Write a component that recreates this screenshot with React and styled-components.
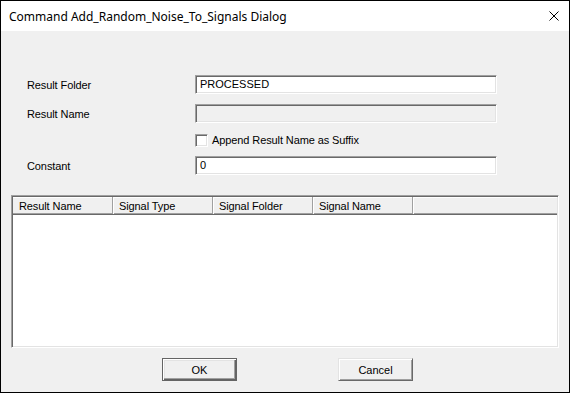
import React from "react";
import styled, { createGlobalStyle } from "styled-components";

const Global = createGlobalStyle`
  html, body { margin: 0; padding: 0; background: #f0f0f0; }
  * { box-sizing: border-box; }
`;

const Window = styled.div`
  width: 570px;
  height: 393px;
  border: 1px solid #000;
  display: flex;
  flex-direction: column;
  background: #f0f0f0;
  font-family: "Liberation Sans", Arial, sans-serif;
  font-size: 11px;
  color: #000;
`;

const TitleBar = styled.div`
  height: 30px;
  flex: none;
  background: #fff;
  display: flex;
  align-items: center;
  justify-content: space-between;
  padding: 0 10px 0 8px;
`;

const Title = styled.div`
  font-family: "Segoe UI", "Noto Sans", sans-serif;
  font-size: 12px;
  color: #000;
  padding-top: 1px;
`;

const CloseIcon = styled.svg`
  width: 10px;
  height: 10px;
`;

const Body = styled.div`
  flex: 1;
  display: flex;
  flex-direction: column;
  padding: 44px 10px 0 10px;
`;

const Form = styled.div`
  display: grid;
  grid-template-columns: 168px 302px;
  grid-template-rows: 19px 19px 13px 19px;
  row-gap: 10px;
  padding-left: 16px;
  align-items: center;
`;

const Label = styled.div`
  white-space: nowrap;
  letter-spacing: -0.1px;
`;

const Input = styled.div`
  height: 19px;
  width: 302px;
  background: ${(p) => (p.$disabled ? "#f0f0f0" : "#fff")};
  border-style: solid;
  border-width: 1px;
  border-color: #a0a0a0 #fff #fff #a0a0a0;
  box-shadow: inset 1px 1px 0 #696969, inset -1px -1px 0 #e3e3e3;
  padding: 2px 0 0 4px;
  line-height: 13px;
  white-space: nowrap;
`;

const CheckRow = styled.label`
  grid-column: 2;
  display: flex;
  align-items: center;
  gap: 4px;
  margin-top: 1px;
  letter-spacing: -0.1px;
`;

const CheckBox = styled.span`
  width: 13px;
  height: 13px;
  background: #fff;
  border-style: solid;
  border-width: 1px;
  border-color: #a0a0a0 #fff #fff #a0a0a0;
  box-shadow: inset 1px 1px 0 #696969, inset -1px -1px 0 #e3e3e3;
`;

const ListView = styled.div`
  margin-top: 20px;
  height: 153px;
  background: #fff;
  border-style: solid;
  border-width: 1px;
  border-color: #a0a0a0 #fff #fff #a0a0a0;
  box-shadow: inset 1px 1px 0 #696969, inset -1px -1px 0 #e3e3e3;
  padding: 1px;
  display: flex;
  flex-direction: column;
`;

const Header = styled.div`
  display: flex;
  height: 18px;
  background: #f0f0f0;
  border-bottom: 1px solid #696969;
  box-shadow: inset 0 -1px 0 #a0a0a0, inset 0 1px 0 #fff;
`;

const HeaderCell = styled.div`
  width: ${(p) => (p.$fill ? "auto" : "100px")};
  flex: ${(p) => (p.$fill ? "1" : "none")};
  padding: 3px 0 0 6px;
  border-right: ${(p) => (p.$fill ? "none" : "1px solid #a0a0a0")};
  box-shadow: ${(p) => (p.$first ? "none" : "inset 1px 0 0 #fff")};
  white-space: nowrap;
  line-height: 13px;
  letter-spacing: -0.1px;
`;

const Buttons = styled.div`
  display: flex;
  justify-content: center;
  gap: 101px;
  margin-top: 10px;
  padding-left: 5px;
`;

const Button = styled.button`
  width: 75px;
  height: 23px;
  font-family: "Liberation Sans", Arial, sans-serif;
  font-size: 11px;
  color: #000;
  background: #f0f0f0;
  padding: 0;
  border-style: solid;
  border-width: 1px;
  ${(p) =>
    p.$default
      ? `border-color: #646464;
         box-shadow: inset 1px 1px 0 #fff, inset -1px -1px 0 #646464, inset -2px -2px 0 #a0a0a0, inset 2px 2px 0 #e3e3e3;`
      : `border-color: #e3e3e3 #696969 #696969 #e3e3e3;
         box-shadow: inset 1px 1px 0 #fff, inset -1px -1px 0 #a0a0a0;`}
`;

export default function App() {
  return (
    <>
      <Global />
      <Window>
        <TitleBar>
          <Title>Command Add_Random_Noise_To_Signals Dialog</Title>
          <CloseIcon viewBox="0 0 10 10">
            <path d="M0.5 0.5 L9.5 9.5 M9.5 0.5 L0.5 9.5" stroke="#000" strokeWidth="1" fill="none" />
          </CloseIcon>
        </TitleBar>
        <Body>
          <Form>
            <Label>Result Folder</Label>
            <Input>PROCESSED</Input>
            <Label>Result Name</Label>
            <Input $disabled />
            <CheckRow>
              <CheckBox />
              <span>Append Result Name as Suffix</span>
            </CheckRow>
            <Label>Constant</Label>
            <Input>0</Input>
          </Form>
          <ListView>
            <Header>
              <HeaderCell $first>Result Name</HeaderCell>
              <HeaderCell>Signal Type</HeaderCell>
              <HeaderCell>Signal Folder</HeaderCell>
              <HeaderCell>Signal Name</HeaderCell>
              <HeaderCell $fill />
            </Header>
          </ListView>
          <Buttons>
            <Button $default>OK</Button>
            <Button>Cancel</Button>
          </Buttons>
        </Body>
      </Window>
    </>
  );
}
